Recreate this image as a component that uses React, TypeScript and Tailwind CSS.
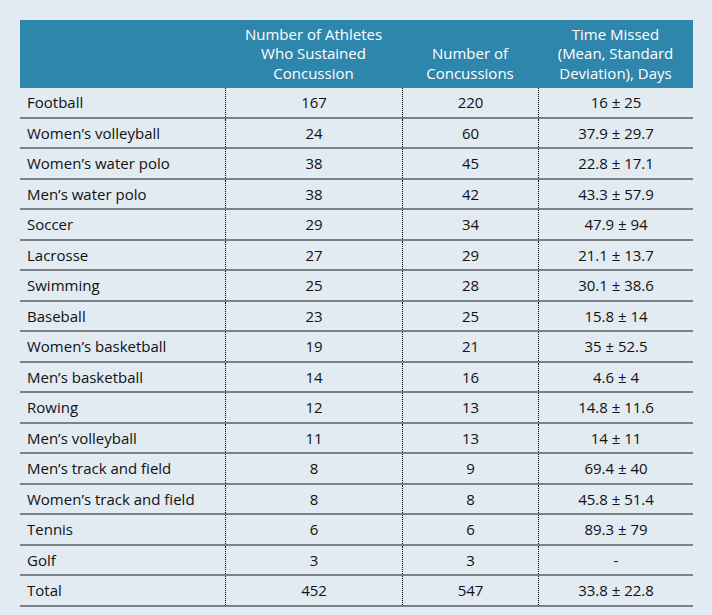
import React from 'react';

const rows: [string, string, string, string][] = [
  ['Football', '167', '220', '16 ± 25'],
  ['Women’s volleyball', '24', '60', '37.9 ± 29.7'],
  ['Women’s water polo', '38', '45', '22.8 ± 17.1'],
  ['Men’s water polo', '38', '42', '43.3 ± 57.9'],
  ['Soccer', '29', '34', '47.9 ± 94'],
  ['Lacrosse', '27', '29', '21.1 ± 13.7'],
  ['Swimming', '25', '28', '30.1 ± 38.6'],
  ['Baseball', '23', '25', '15.8 ± 14'],
  ['Women’s basketball', '19', '21', '35 ± 52.5'],
  ['Men’s basketball', '14', '16', '4.6 ± 4'],
  ['Rowing', '12', '13', '14.8 ± 11.6'],
  ['Men’s volleyball', '11', '13', '14 ± 11'],
  ['Men’s track and field', '8', '9', '69.4 ± 40'],
  ['Women’s track and field', '8', '8', '45.8 ± 51.4'],
  ['Tennis', '6', '6', '89.3 ± 79'],
  ['Golf', '3', '3', '-'],
  ['Total', '452', '547', '33.8 ± 22.8'],
];

const cols = 'grid grid-cols-[205px_177px_136px_155px]';

const App = () => {
  return (
    <div className="w-[712px] h-[615px] bg-[#e2eaf2] pt-[20px] pl-[20px] font-['Open_Sans',sans-serif] text-[15px] text-[#111]">
      <div className="w-[673px]">
        <div className={`${cols} bg-[#2e86ac] text-white h-[68px] leading-[19.5px] items-end pb-[5px]`}>
          <div></div>
          <div className="text-center">
            Number of Athletes
            <br />
            Who Sustained
            <br />
            Concussion
          </div>
          <div className="text-center">
            Number of
            <br />
            Concussions
          </div>
          <div className="text-center">
            Time Missed
            <br />
            (Mean, Standard
            <br />
            Deviation), Days
          </div>
        </div>
        {rows.map((r) => (
          <div key={r[0]} className={`${cols} h-[30.5px] border-b-2 border-[#7d8288]`}>
            <div className="pl-[7px] flex items-center">{r[0]}</div>
            <div className="border-l border-dotted border-black flex items-center justify-center">{r[1]}</div>
            <div className="border-l border-dotted border-black flex items-center justify-center">{r[2]}</div>
            <div className="border-l border-dotted border-black flex items-center justify-center">{r[3]}</div>
          </div>
        ))}
      </div>
    </div>
  );
};

export default App;
